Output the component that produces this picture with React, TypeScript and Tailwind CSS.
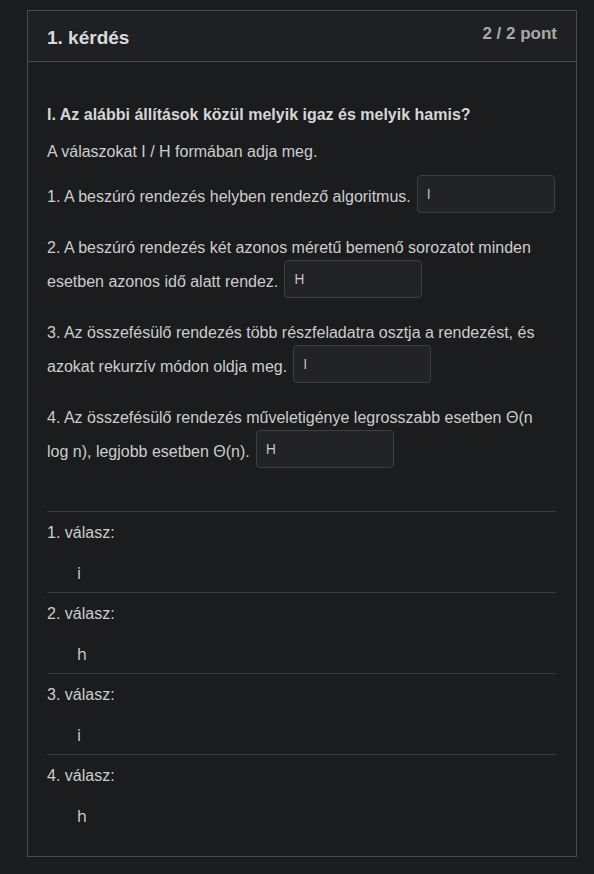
// Kvíz-áttekintés kártya: egy kérdés I/H válaszokkal, sötét téma

const statements: { before: string; answer: string }[] = [
  { before: "1. A beszúró rendezés helyben rendező algoritmus.", answer: "I" },
  {
    before: "2. A beszúró rendezés két azonos méretű bemenő sorozatot minden esetben azonos idő alatt rendez.",
    answer: "H",
  },
  {
    before: "3. Az összefésülő rendezés több részfeladatra osztja a rendezést, és azokat rekurzív módon oldja meg.",
    answer: "I",
  },
  {
    before: "4. Az összefésülő rendezés műveletigénye legrosszabb esetben Θ(n log n), legjobb esetben Θ(n).",
    answer: "H",
  },
];

const answers = ["i", "h", "i", "h"];

function AnswerBox({ value }: { value: string }) {
  return (
    <span className="ml-[6px] inline-block h-[38px] w-[138px] rounded-[4px] border border-[#3d3e41] bg-[#222326] px-[9px] align-[3px] font-['Open_Sans',sans-serif] text-[14px] leading-[36px] text-[#cfcfcf]">
      {value}
    </span>
  );
}

export default function App() {
  return (
    <div className="min-h-[874px] bg-[#1b1c1e] pt-[10px] pb-[18px] font-['Liberation_Sans',Arial,sans-serif] text-[16px] text-[#cdcdcd]">
      <div className="ml-[27px] w-[550px] border border-[#48494c]">
        <div className="flex h-[51px] items-start justify-between border-b border-[#48494c] bg-[#1f2023] px-[19px] pt-[11px]">
          <h2 className="mt-[2px] text-[19px] leading-[28px] font-bold text-[#dadada]">1. kérdés</h2>
          <span className="text-[17px] leading-[24px] font-bold text-[#a9a9a9]">2 / 2 pont</span>
        </div>

        <div className="px-[19px] pt-[41px] pb-[21px] pr-[20px]">
          <p className="leading-6 font-bold text-[#d6d6d6]">I. Az alábbi állítások közül melyik igaz és melyik hamis?</p>
          <p className="mt-[13px] leading-6">A válaszokat I / H formában adja meg.</p>

          <div className="mt-[11px] flex flex-col gap-[23px]">
            {statements.map((s, i) => (
              <p key={i} className="leading-6">
                {s.before}
                <AnswerBox value={s.answer} />
              </p>
            ))}
          </div>

          <div className="mt-[43px]">
            {answers.map((a, i) => (
              <div key={i} className="border-t border-[#38393c] pt-[9px] pb-[7px]">
                <div className="leading-6">{i + 1}. válasz:</div>
                <div className="mt-[16px] pl-[30px] font-['Open_Sans',sans-serif] leading-6 text-[#d4d4d4]">{a}</div>
              </div>
            ))}
          </div>
        </div>
      </div>
    </div>
  );
}
